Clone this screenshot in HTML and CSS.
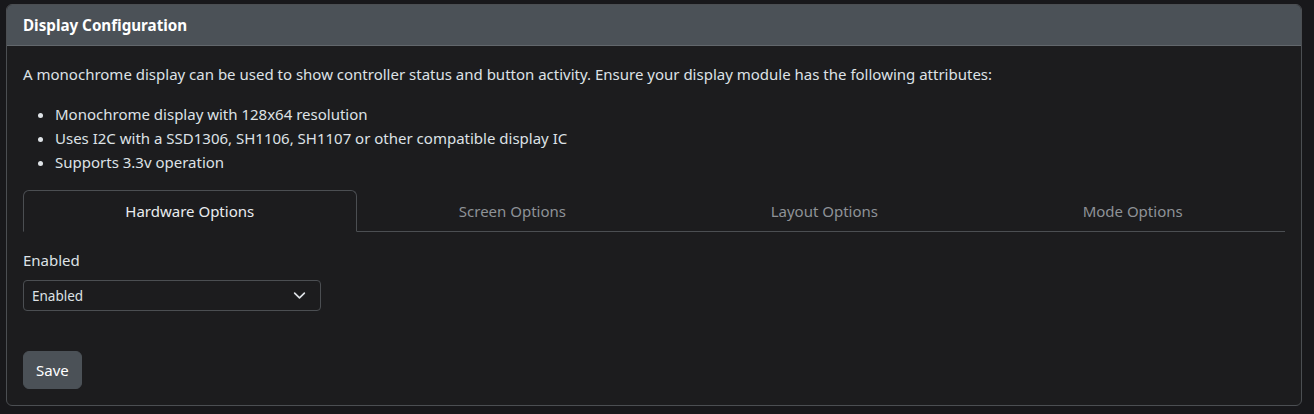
FILE: index.html
```html
<!DOCTYPE html>
<html lang="en">
<head>
<meta charset="utf-8">
<title>Display Configuration</title>
<link rel="stylesheet" href="styles.css">
</head>
<body>
<div class="card">
  <div class="card-header">Display Configuration</div>
  <div class="card-body">
    <p class="intro">A monochrome display can be used to show controller status and button activity. Ensure your display module has the following attributes:</p>
    <ul class="attrs">
      <li>Monochrome display with 128x64 resolution</li>
      <li>Uses I2C with a SSD1306, SH1106, SH1107 or other compatible display IC</li>
      <li>Supports 3.3v operation</li>
    </ul>
    <div class="tabs">
      <div class="tab active">Hardware Options</div>
      <div class="tab">Screen Options</div>
      <div class="tab">Layout Options</div>
      <div class="tab">Mode Options</div>
    </div>
    <div class="tab-content">
      <label class="field-label">Enabled</label>
      <div class="select">
        <span>Enabled</span>
        <svg class="chev" width="16" height="16" viewBox="0 0 16 16"><path d="M2 5l6 6 6-6" fill="none" stroke="#dee2e6" stroke-width="2" stroke-linecap="round" stroke-linejoin="round"/></svg>
      </div>
      <button class="btn">Save</button>
    </div>
  </div>
</div>
</body>
</html>
```
FILE: styles.css
```css
html, body {
  margin: 0;
  padding: 0;
  background: #18181b;
}
body {
  padding: 4px 12px 0 6px;
  font-family: "Noto Sans", "Open Sans", sans-serif;
  font-size: 15px;
  line-height: 24px;
  color: #dee2e6;
}
.card {
  width: 1294px;
  border: 1px solid #4b4e52;
  border-radius: 6px;
  background: #1c1c1e;
  overflow: hidden;
}
.card-header {
  background: #4b5157;
  border-bottom: 1px solid #62676c;
  padding: 8px 16px;
  font-weight: 700;
  font-size: 15.2px;
  line-height: 24px;
  color: #ffffff;
}
.card-body {
  padding: 16px;
}
.intro {
  margin: 0 0 16px 0;
}
.attrs {
  margin: 0 0 16px 0;
  padding-left: 32px;
}
.tabs {
  display: flex;
  border-bottom: 1px solid #4b4e52;
}
.tab {
  flex: 1 1 auto;
  text-align: center;
  padding: 8px 16px;
  border: 1px solid transparent;
  border-top-left-radius: 6px;
  border-top-right-radius: 6px;
  margin-bottom: -1px;
  color: #8e9297;
}
.tab.active {
  color: #e9ecef;
  background: #1c1c1e;
  border-color: #4b4e52 #4b4e52 #1c1c1e;
}
.tab-content {
  padding-top: 16px;
  display: flex;
  flex-direction: column;
  align-items: flex-start;
}
.field-label {
  margin-bottom: 8px;
}
.select {
  box-sizing: content-box;
  width: 274px;
  height: 29px;
  border: 1px solid #4b4e52;
  border-radius: 4px;
  display: flex;
  align-items: center;
  justify-content: space-between;
  padding: 0 14px 0 8px;
  font-size: 13.5px;
}
.chev {
  width: 13px;
  height: 13px;
}
.btn {
  margin-top: 40px;
  height: 38px;
  padding: 0 12px;
  border: 1px solid #4b5157;
  border-radius: 6px;
  background: #4b5157;
  color: #ffffff;
  font-family: inherit;
  font-size: 15px;
  line-height: 24px;
}
```
